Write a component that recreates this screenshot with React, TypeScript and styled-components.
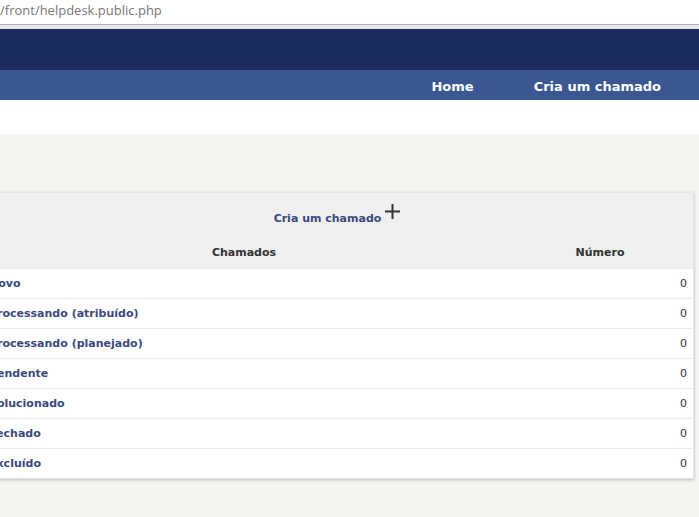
import React from "react";
import styled, { createGlobalStyle } from "styled-components";

const Global = createGlobalStyle`
  html, body { margin: 0; padding: 0; background: #f5f4f0; overflow: hidden; }
  body { font-family: "DejaVu Sans", Verdana, sans-serif; }
`;

const Page = styled.div`
  width: 699px;
  height: 517px;
  display: flex;
  flex-direction: column;
  background: #f5f4f0;
  overflow: hidden;
`;

const AddressBar = styled.div`
  background: #ffffff;
  border-bottom: 1px solid #b4aec4;
  display: flex;
  align-items: center;
  font-family: "Open Sans", "Liberation Sans", sans-serif;
  font-size: 13px;
  color: #777777;
  line-height: 1;
  box-sizing: border-box;
  height: 25px;
  padding-bottom: 3px;
`;

const TopStrip = styled.div`
  height: 4px;
  background: #e6e6e8;
`;

const Banner = styled.div`
  height: 41px;
  background: #1d2c5f;
`;

const NavBar = styled.nav`
  height: 30px;
  background: #3a5792;
  display: flex;
  justify-content: flex-end;
  align-items: center;
  padding-right: 38px;
  padding-top: 2px;
  box-sizing: border-box;
  gap: 60px;
`;

const NavLink = styled.a`
  color: #ffffff;
  font-weight: bold;
  font-size: 13px;
  text-decoration: none;
`;

const WhiteBand = styled.div`
  height: 34px;
  background: #ffffff;
`;

const Main = styled.main`
  flex: 1;
  padding-top: 58px;
  margin-left: -20px;
  width: 714px;
`;

const Card = styled.div`
  background: #ffffff;
  box-shadow: 0 1px 3px rgba(0, 0, 0, 0.22);
  border: 1px solid #e4e4e4;
`;

const CardTitle = styled.div`
  background: #efefef;
  height: 44px;
  display: flex;
  align-items: center;
  justify-content: center;
  padding-top: 2px;
  box-sizing: border-box;
`;

const TitleLink = styled.a`
  color: #3a4a7c;
  font-weight: bold;
  font-size: 11px;
  text-decoration: none;
  margin-top: 4px;
`;

const PlusIcon = styled.svg`
  width: 15px;
  height: 15px;
  margin-left: 4px;
  margin-bottom: 10px;
`;

const Table = styled.div`
  display: grid;
  grid-template-columns: 526px 1fr;
`;

const HeadCell = styled.div`
  background: #efefef;
  height: 31px;
  display: flex;
  align-items: center;
  justify-content: center;
  font-weight: bold;
  font-size: 11px;
  color: #333333;
`;

const Cell = styled.div<{ $right?: boolean }>`
  height: 29px;
  border-top: 1px solid #ececec;
  display: flex;
  align-items: center;
  justify-content: ${(p) => (p.$right ? "flex-end" : "flex-start")};
  padding: ${(p) => (p.$right ? "0 6px 0 0" : "0 0 0 8px")};
  font-size: 11px;
  color: #333333;
`;

const RowLink = styled.a`
  color: #3a4a7c;
  font-weight: bold;
  text-decoration: none;
`;

const statuses = [
  "Novo",
  "Processando (atribuído)",
  "Processando (planejado)",
  "Pendente",
  "Solucionado",
  "Fechado",
  "Excluído",
];

export default function App() {
  return (
    <>
      <Global />
      <Page>
        <AddressBar>/front/helpdesk.public.php</AddressBar>
        <TopStrip />
        <Banner />
        <NavBar>
          <NavLink href="#">Home</NavLink>
          <NavLink href="#">Cria um chamado</NavLink>
        </NavBar>
        <WhiteBand />
        <Main>
          <Card>
            <CardTitle>
              <TitleLink href="#">Cria um chamado</TitleLink>
              <PlusIcon viewBox="0 0 15 15">
                <path d="M7.5 0v15M0 7.5h15" stroke="#333" strokeWidth="2" />
              </PlusIcon>
            </CardTitle>
            <Table>
              <HeadCell>Chamados</HeadCell>
              <HeadCell>Número</HeadCell>
              {statuses.map((s) => (
                <React.Fragment key={s}>
                  <Cell>
                    <RowLink href="#">{s}</RowLink>
                  </Cell>
                  <Cell $right>0</Cell>
                </React.Fragment>
              ))}
            </Table>
          </Card>
        </Main>
      </Page>
    </>
  );
}
